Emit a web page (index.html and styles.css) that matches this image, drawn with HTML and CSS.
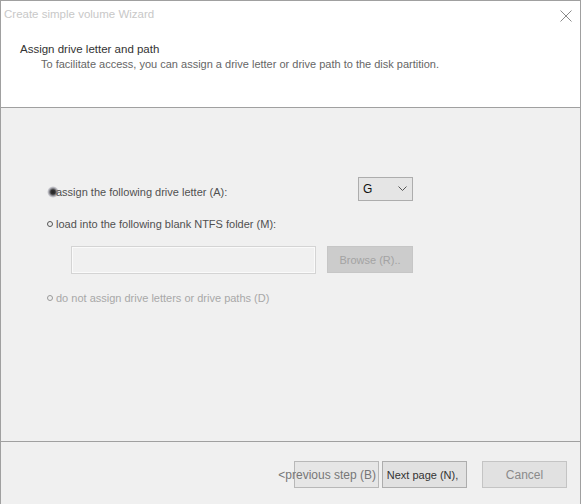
FILE: index.html
```html
<!DOCTYPE html>
<html>
  <head>
    <title>Create simple volume Wizard</title>
    <link rel="stylesheet" href="styles.css">
  </head>

  <body>
    <div class="window">
      <!-- header -->
      <div class="wizard-header">
        <div class="title-bar">
          <span class="title">Create simple volume Wizard</span>
          <svg class="close" width="12" height="12" viewBox="0 0 12 12">
            <path d="M0.5 0.5 L11.5 11.5 M11.5 0.5 L0.5 11.5" stroke="#8a8a8a" stroke-width="1" fill="none" />
          </svg>
        </div>
        <div class="page-title">Assign drive letter and path</div>
        <div class="page-desc">To facilitate access, you can assign a drive letter or drive path to the disk partition.</div>
      </div>

      <!-- options -->
      <div class="wizard-body">
        <div class="option-row">
          <label class="option">
            <span class="radio checked"></span>
            <span class="option-text">assign the following drive letter (A):</span>
          </label>
          <div class="select">
            <span>G</span>
            <svg width="9" height="6" viewBox="0 0 9 6">
              <path d="M0.5 0.5 L4.5 4.5 L8.5 0.5" stroke="#555" stroke-width="1" fill="none" />
            </svg>
          </div>
        </div>

        <label class="option option-folder">
          <span class="radio"></span>
          <span class="option-text">load into the following blank NTFS folder (M):</span>
        </label>

        <div class="folder-row">
          <div class="path-input"></div>
          <button class="btn-browse">Browse (R)..</button>
        </div>

        <label class="option option-none">
          <span class="radio"></span>
          <span class="option-text">do not assign drive letters or drive paths (D)</span>
        </label>
      </div>

      <!-- buttons -->
      <div class="wizard-footer">
        <button class="btn btn-prev"><span>&lt;previous step (B)</span></button>
        <button class="btn btn-next">Next page (N),</button>
        <button class="btn btn-cancel">Cancel</button>
      </div>
    </div>
  </body>
</html>
```

FILE: styles.css
```css
body {
  margin: 0;
  background-color: #fff;
  font-family: "Liberation Sans", Arial, sans-serif;
  font-size: 11px;
}

.window {
  width: 579px;
  height: 503px;
  border: 1px solid #a0a0a0;
  border-bottom: none;
  background-color: #f0f0f0;
  display: flex;
  flex-direction: column;
}

/* Header */
.wizard-header {
  background-color: #fff;
  height: 106px;
  border-bottom: 1px solid #a0a0a0;
}

.title-bar {
  display: flex;
  justify-content: space-between;
  align-items: center;
  height: 14px;
  padding: 6px 8px 0 3px;
}

.title {
  color: #c8c8c8;
  font-size: 11.5px;
}

.close {
  margin-top: 3px;
}

.page-title {
  color: #333;
  font-size: 11.5px;
  margin: 22px 0 0 19px;
}

.page-desc {
  color: #666;
  font-size: 11px;
  margin: 3px 0 0 40px;
}

/* Body */
.wizard-body {
  height: 334px;
  border-bottom: 1px solid #a0a0a0;
  padding: 69px 0 0 46px;
  box-sizing: border-box;
}

.option-row {
  display: flex;
  align-items: center;
}

.option {
  display: flex;
  align-items: center;
  color: #505050;
  line-height: 14px;
}

.option-row .option {
  width: 311px;
  padding-top: 6px;
}

.radio {
  width: 4px;
  height: 4px;
  border: 1px solid #555;
  border-radius: 50%;
  margin-right: 3px;
}

.radio.checked {
  width: 12px;
  height: 12px;
  border: none;
  margin: 0 -3px 0 0;
  background: radial-gradient(circle, #222 0, #333 25%, rgba(60, 60, 80, 0.4) 50%, rgba(0, 0, 0, 0) 70%);
}

.select {
  width: 55px;
  height: 24px;
  border: 1px solid #adadad;
  background-color: #e5e5e5;
  display: flex;
  align-items: center;
  justify-content: space-between;
  padding: 0 5px 0 4px;
  box-sizing: border-box;
  font-size: 12px;
  color: #111;
}

.option-folder {
  margin-top: 16px;
}

.folder-row {
  display: flex;
  margin: 15px 0 0 24px;
}

.path-input {
  width: 243px;
  height: 26px;
  border: 1px solid #d4d4d4;
  box-shadow: inset 0 0 0 1px #fafafa;
  background-color: #f0f0f0;
}

.btn-browse {
  width: 86px;
  height: 27px;
  margin-left: 11px;
  border: 1px solid #c6c6c6;
  background-color: #cccccc;
  color: #a3a3a3;
  font-family: "Liberation Sans", Arial, sans-serif;
  font-size: 11px;
  padding: 0;
}

.option-none {
  margin-top: 17px;
  color: #a8a8a8;
}

.option-none .radio {
  border-color: #999;
}

/* Footer */
.wizard-footer {
  display: flex;
  padding: 19px 0 0 293px;
}

.btn {
  width: 85px;
  height: 27px;
  border: 1px solid #adadad;
  background-color: #e1e1e1;
  font-family: "Liberation Sans", Arial, sans-serif;
  font-size: 11px;
  padding: 0;
}

.btn-prev {
  display: flex;
  align-items: center;
  justify-content: flex-end;
  white-space: nowrap;
  padding-right: 2px;
  color: #777;
  background-color: #e6e6e6;
  border-color: #b8b8b8;
  font-size: 12px;
}

.btn-next {
  margin-left: 3px;
  color: #333;
  padding-right: 4px;
}

.btn-cancel {
  margin-left: 15px;
  color: #8a8a8a;
  font-size: 12px;
  border-color: #c4c4c4;
}
```
